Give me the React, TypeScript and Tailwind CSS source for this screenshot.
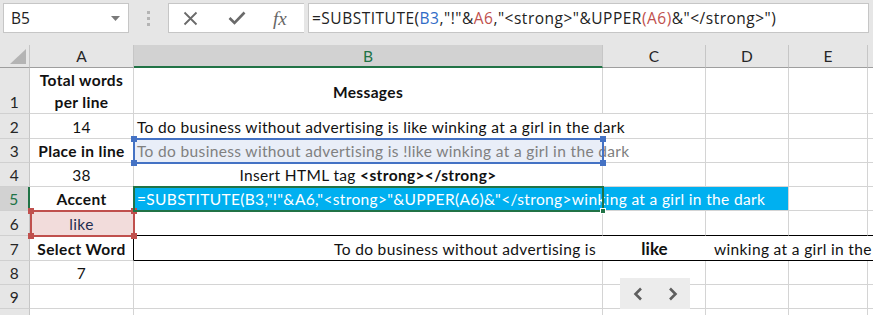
import React from 'react';

// Column widths (px): row head 30, A 104, B 469, C 103, D 83, E 79, F 5 (partial)
const grid = 'border-r border-b border-[#d4d4d4]';

type CellProps = { className?: string; center?: boolean; children?: React.ReactNode };

const Cell = ({ className = '', center = false, children }: CellProps) => (
    <div className={`shrink-0 flex px-[3px] whitespace-nowrap ${center ? 'items-center' : 'items-end pb-[2px]'} ${className}`}>
        {children}
    </div>
);

const RowHead = ({ n, active = false }: { n?: number; active?: boolean }) => (
    <div
        className={`shrink-0 w-[30px] flex items-end justify-center pb-[2px] border-b border-b-[#d0d0d0] ${active
            ? 'bg-[#d2d2d2] text-[#217346] border-r-2 border-r-[#217346]'
            : 'bg-[#e6e6e6] text-[#262626] border-r border-r-[#c6c6c6]'
            }`}
    >
        {n}
    </div>
);

const Handle = ({ className }: { className: string }) => (
    <div className={`absolute w-[6px] h-[6px] ${className}`} />
);

export default function App() {
    return (
        <div className="relative w-[873px] h-[315px] overflow-hidden bg-white font-['Lato',sans-serif] text-[15.5px] tracking-[0.35px] leading-[18px] text-[#111]">
            {/* Formula bar */}
            <div className="h-[45px] bg-[#e6e6e6] flex items-start pt-[3px] font-['Open_Sans',sans-serif] tracking-normal">
                <div className="ml-[3px] w-[126px] h-[30px] bg-white border border-[#c6c6c6] flex items-center justify-between pl-[7px] pr-[8px] text-[15.5px] text-[#222]">
                    <span>B5</span>
                    <svg width="9" height="5" viewBox="0 0 9 5"><path d="M0 0h9L4.5 5z" fill="#7a7a7a" /></svg>
                </div>
                <div className="w-[39px] h-[30px] flex flex-col items-center justify-center gap-[3px]">
                    <div className="w-[3px] h-[3px] bg-[#b4b4b4]" />
                    <div className="w-[3px] h-[3px] bg-[#b4b4b4]" />
                    <div className="w-[3px] h-[3px] bg-[#b4b4b4]" />
                </div>
                <div className="w-[136px] h-[30px] bg-white border border-[#c6c6c6] border-r-0 flex items-center">
                    <svg className="ml-[14px]" width="15" height="15" viewBox="0 0 15 15">
                        <path d="M1.5 1.5l12 12M13.5 1.5l-12 12" stroke="#6a6a6a" strokeWidth="1.8" />
                    </svg>
                    <svg className="ml-[30px]" width="18" height="14" viewBox="0 0 18 14">
                        <path d="M1.5 7l5 5L16.5 1.5" stroke="#6a6a6a" strokeWidth="2.6" fill="none" />
                    </svg>
                    <span className="ml-[27px] font-['Liberation_Serif',serif] italic text-[19px] text-[#666] leading-none">fx</span>
                </div>
                <div className="ml-[4px] w-[561px] h-[30px] bg-white border border-[#c6c6c6] flex items-center pl-[3px] text-[15.5px] tracking-[0.5px] text-[#222]">
                    <span>
                        =SUBSTITUTE(<span className="text-[#2f6bc6]">B3</span>,"!"&amp;<span className="text-[#c0504d]">A6</span>,"&lt;strong&gt;"&amp;UPPER<span className="text-[#c0504d]">(A6)</span>&amp;"&lt;/strong&gt;")
                    </span>
                </div>
            </div>

            {/* Column headers */}
            <div className="flex h-[23px] bg-[#e6e6e6] text-[#262626] tracking-normal">
                <div className="shrink-0 w-[30px] border-r border-b border-r-[#c6c6c6] border-b-[#9e9e9e] flex items-end justify-end pr-[3px] pb-[3px]">
                    <svg width="16" height="15" viewBox="0 0 16 15"><path d="M16 0v15H0z" fill="#b4b4b4" /></svg>
                </div>
                <div className="shrink-0 w-[104px] border-r border-b border-r-[#c6c6c6] border-b-[#9e9e9e] flex items-center justify-center">A</div>
                <div className="shrink-0 w-[469px] bg-[#d2d2d2] border-r border-r-[#c6c6c6] border-b-2 border-b-[#217346] flex items-center justify-center text-[#217346]">B</div>
                <div className="shrink-0 w-[103px] border-r border-b border-r-[#c6c6c6] border-b-[#9e9e9e] flex items-center justify-center">C</div>
                <div className="shrink-0 w-[83px] border-r border-b border-r-[#c6c6c6] border-b-[#9e9e9e] flex items-center justify-center">D</div>
                <div className="shrink-0 w-[79px] border-r border-b border-r-[#c6c6c6] border-b-[#9e9e9e] flex items-center justify-center">E</div>
                <div className="shrink-0 w-[5px] border-b border-b-[#9e9e9e]" />
            </div>

            {/* Row 1 */}
            <div className="flex h-[46px]">
                <RowHead n={1} />
                <Cell className={`${grid} w-[104px] justify-center !pb-0`}>
                    <div className="text-center font-bold leading-[22px]">Total words<br />per line</div>
                </Cell>
                <Cell center className={`${grid} w-[469px] justify-center font-bold pt-[2px]`}>Messages</Cell>
                <Cell className={`${grid} w-[103px]`} />
                <Cell className={`${grid} w-[83px]`} />
                <Cell className={`${grid} w-[79px]`} />
                <Cell className="border-b border-[#d4d4d4] w-[5px] px-0" />
            </div>

            {/* Row 2 */}
            <div className="flex h-[25px]">
                <RowHead n={2} />
                <Cell className={`${grid} w-[104px] justify-center`}>14</Cell>
                <Cell className="border-b border-[#d4d4d4] w-[469px] relative z-10 overflow-visible">
                    To do business without advertising is like winking at a girl in the dark
                </Cell>
                <Cell className={`${grid} w-[103px]`} />
                <Cell className={`${grid} w-[83px]`} />
                <Cell className={`${grid} w-[79px]`} />
                <Cell className="border-b border-[#d4d4d4] w-[5px] px-0" />
            </div>

            {/* Row 3 */}
            <div className="flex h-[24px]">
                <RowHead n={3} />
                <Cell className={`${grid} w-[104px] justify-center font-bold`}>Place in line</Cell>
                <Cell className="border-b border-[#d4d4d4] w-[469px] bg-[#e9eef8] text-[#808080] relative z-10 overflow-visible">
                    To do business without advertising is !like winking at a girl in the dark
                </Cell>
                <Cell className={`${grid} w-[103px]`} />
                <Cell className={`${grid} w-[83px]`} />
                <Cell className={`${grid} w-[79px]`} />
                <Cell className="border-b border-[#d4d4d4] w-[5px] px-0" />
            </div>

            {/* Row 4 */}
            <div className="flex h-[24px]">
                <RowHead n={4} />
                <Cell className={`${grid} w-[104px] justify-center`}>38</Cell>
                <Cell className={`${grid} w-[469px] justify-center`}>
                    Insert HTML tag&nbsp;<b>&lt;strong&gt;&lt;/strong&gt;</b>
                </Cell>
                <Cell className={`${grid} w-[103px]`} />
                <Cell className={`${grid} w-[83px]`} />
                <Cell className={`${grid} w-[79px]`} />
                <Cell className="border-b border-[#d4d4d4] w-[5px] px-0" />
            </div>

            {/* Row 5 */}
            <div className="flex h-[24px]">
                <RowHead n={5} active />
                <Cell className={`${grid} w-[104px] justify-center font-bold`}>Accent</Cell>
                <Cell className={`${grid} w-[655px] bg-[#00b0f0] text-white overflow-hidden`}>
                    =SUBSTITUTE(B3,"!"&amp;A6,"&lt;strong&gt;"&amp;UPPER(A6)&amp;"&lt;/strong&gt;winking at a girl in the dark
                </Cell>
                <Cell className={`${grid} w-[79px]`} />
                <Cell className="border-b border-[#d4d4d4] w-[5px] px-0" />
            </div>

            {/* Row 6 */}
            <div className="flex h-[25px]">
                <RowHead n={6} />
                <Cell className={`${grid} w-[104px] justify-center bg-[#f2dcdb] text-[#1f2d50]`}>like</Cell>
                <Cell className="border-r border-r-[#d4d4d4] border-b border-b-black w-[469px]" />
                <Cell className="border-r border-r-[#d4d4d4] border-b border-b-black w-[103px]" />
                <Cell className="border-r border-r-[#d4d4d4] border-b border-b-black w-[83px]" />
                <Cell className="border-r border-r-[#d4d4d4] border-b border-b-black w-[79px]" />
                <Cell className="border-b border-b-black w-[5px] px-0" />
            </div>

            {/* Row 7 */}
            <div className="flex h-[25px]">
                <RowHead n={7} />
                <Cell className="border-b border-b-[#d4d4d4] border-r border-r-black w-[104px] justify-center font-bold">Select Word</Cell>
                <Cell className="border-b border-b-black w-[469px] justify-end pr-[7px]">To do business without advertising is</Cell>
                <Cell className="border-b border-b-black w-[103px] justify-center font-bold text-[17px] tracking-normal">like</Cell>
                <Cell className="border-b border-b-black w-[83px] pl-[8px] relative z-10 overflow-visible">winking at a girl in the</Cell>
                <Cell className="border-b border-b-black w-[79px]" />
                <Cell className="border-b border-b-black w-[5px] px-0" />
            </div>

            {/* Row 8 */}
            <div className="flex h-[24px]">
                <RowHead n={8} />
                <Cell className={`${grid} w-[104px] justify-center`}>7</Cell>
                <Cell className={`${grid} w-[469px]`} />
                <Cell className={`${grid} w-[103px]`} />
                <Cell className={`${grid} w-[83px]`} />
                <Cell className={`${grid} w-[79px]`} />
                <Cell className="border-b border-[#d4d4d4] w-[5px] px-0" />
            </div>

            {/* Row 9 */}
            <div className="flex h-[24px]">
                <RowHead n={9} />
                <Cell className={`${grid} w-[104px]`} />
                <Cell className={`${grid} w-[469px]`} />
                <Cell className={`${grid} w-[103px]`} />
                <Cell className={`${grid} w-[83px]`} />
                <Cell className={`${grid} w-[79px]`} />
                <Cell className="border-b border-[#d4d4d4] w-[5px] px-0" />
            </div>

            {/* Row 10, cut off by the window */}
            <div className="flex h-[24px]">
                <RowHead />
                <Cell className={`${grid} w-[104px]`} />
                <Cell className={`${grid} w-[469px]`} />
                <Cell className={`${grid} w-[103px]`} />
                <Cell className={`${grid} w-[83px]`} />
                <Cell className={`${grid} w-[79px]`} />
                <Cell className="border-b border-[#d4d4d4] w-[5px] px-0" />
            </div>

            {/* B3 reference highlight */}
            <div className="absolute left-[133px] top-[138px] w-[471px] h-[26px] border-2 border-[#4472c4] z-20 pointer-events-none">
                <Handle className="-left-[4px] -top-[4px] bg-[#4472c4]" />
                <Handle className="-right-[4px] -top-[4px] bg-[#4472c4]" />
                <Handle className="-left-[4px] -bottom-[4px] bg-[#4472c4]" />
                <Handle className="-right-[4px] -bottom-[4px] bg-[#4472c4]" />
            </div>

            {/* A6 reference highlight */}
            <div className="absolute left-[30px] top-[210px] w-[105px] h-[27px] border-2 border-[#c0504d] z-20 pointer-events-none">
                <Handle className="-left-[4px] -top-[4px] bg-[#c0504d]" />
                <Handle className="-right-[4px] -top-[4px] bg-[#c0504d]" />
                <Handle className="-left-[4px] -bottom-[4px] bg-[#c0504d]" />
                <Handle className="-right-[4px] -bottom-[4px] bg-[#c0504d]" />
            </div>

            {/* Active cell B5 */}
            <div className="absolute left-[133px] top-[186px] w-[471px] h-[26px] border-2 border-[#217346] z-20 pointer-events-none">
                <Handle className="-right-[4px] -bottom-[4px] bg-[#217346] border border-white" />
            </div>

            {/* Scroll buttons */}
            <div className="absolute left-[620px] top-[278px] w-[70px] h-[31px] flex z-20">
                <div className="w-[35px] h-full bg-[#ececec] flex items-center justify-center">
                    <svg width="10" height="14" viewBox="0 0 10 14"><path d="M8 1.5L2.5 7 8 12.5" stroke="#5f5f5f" strokeWidth="2.6" fill="none" /></svg>
                </div>
                <div className="w-[35px] h-full bg-[#ececec] flex items-center justify-center">
                    <svg width="10" height="14" viewBox="0 0 10 14"><path d="M2 1.5L7.5 7 2 12.5" stroke="#5f5f5f" strokeWidth="2.6" fill="none" /></svg>
                </div>
            </div>
        </div>
    );
}
